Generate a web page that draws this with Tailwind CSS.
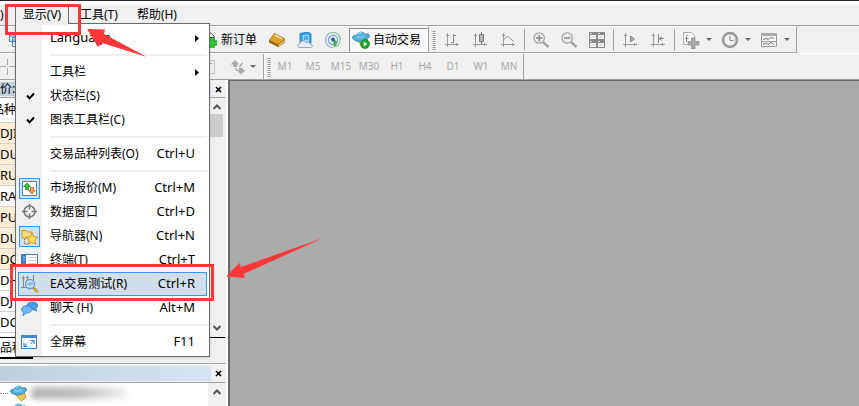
<!DOCTYPE html>
<html lang="zh-CN">
<head>
    <meta charset="UTF-8">
    <meta name="viewport" content="width=device-width, initial-scale=1.0">
    <title>交易终端</title>
    <script src="https://cdn.jsdelivr.net/npm/@tailwindcss/browser@4"></script>
</head>
<body class="relative flex h-screen flex-col overflow-hidden bg-[#f0f0f0] font-['Noto_Sans','Noto_Sans_CJK_SC',sans-serif] text-xs text-black">

    <!-- Símbolos compartidos -->
    <svg class="hidden">
        <symbol id="hat" viewBox="0 0 18 18">
            <path d="M4 8l8 9 5-4-2-5z" fill="#f2c84b" stroke="#a87a12" stroke-width=".8"/>
            <path d="M.500 6.500c0-2 3-2 4-2C5.500 .500 12 0 12.500 3.500c2-1 5-.5 5 1 0 3-4.500 6-9 6s-8-2-8-4z" fill="#4fb2dc" stroke="#2476a3" stroke-width=".8"/>
            <path d="M4.500 5c2 2 6 2 8-.8M6 2.800c1-1 3-1.300 4-.8" stroke="#b9e6f7" fill="none"/>
        </symbol>
        <symbol id="axes" viewBox="0 0 16 16">
            <path d="M3.500 1v14M1 12.500h14M2 3.500h3M12.500 11v3" stroke="#999" fill="none"/>
        </symbol>
        <symbol id="caret" viewBox="0 0 6 3"><path d="M0 0h6L3 3z" fill="#666"/></symbol>
        <symbol id="close" viewBox="0 0 7 7"><path d="M1 1l5 5M6 1L1 6" stroke="#000" stroke-width="1.700"/></symbol>
        <symbol id="check" viewBox="0 0 9 8"><path d="M1 3.500L3.500 6.300 8 1.500" stroke="#000" stroke-width="2" fill="none"/></symbol>
    </svg>

    <!-- Barra de menús -->
    <div class="h-[5px] shrink-0 border-t border-[#2a2529] bg-white"></div>
    <nav class="flex h-5 shrink-0 items-center gap-[3px]">
        <span class="w-3">)</span>
        <button class="h-full w-[54px] text-center">显示(V)</button>
        <button class="h-full px-2">工具(T)</button>
        <button class="h-full px-2">帮助(H)</button>
    </nav>

    <!-- Barra de herramientas principal -->
    <div class="flex h-7 shrink-0 border-t border-[#a0a0a0]">
        <div class="flex items-center border-t border-r border-b border-t-white border-r-[#a0a0a0] border-b-[#a0a0a0]">
            <div class="w-[201px] pl-2">
                <svg class="size-4" viewBox="0 0 16 16"><path d="M1.500 1.500h10v8h-10zM4.500 5.500h10v9h-10zM1 4h11M5 8h9" fill="#e6f1fa" stroke="#3b86c6"/></svg>
            </div>
            <button class="flex w-[62px] items-center gap-1">
                <svg class="size-4" viewBox="0 0 16 16"><path d="M2 1h8l3 3v9H2z" fill="#fff" stroke="#555"/><path d="M4 4h4M4 6h6" stroke="#888"/><path d="M9 5.500h4V9h3.500v4H13v3.500H9V13H5.500V9H9z" fill="#2fd12f" stroke="#128012"/></svg>
                <span class="whitespace-nowrap">新订单</span>
            </button>
            <button class="flex w-7 justify-center" aria-label="市场">
                <svg class="size-4" viewBox="0 0 16 16"><path d="M0 8l9 4v3L0 10.500z" fill="#8d6410"/><path d="M9 12l7-4.500v2.500l-7 5z" fill="#e7c76c" stroke="#9a6b13" stroke-width=".7"/><path d="M5.500 1.500L16 7l-7 5.500L.5 8.200z" fill="#e0a52c" stroke="#9a6b13" stroke-width=".8"/><path d="M6 3l7 3.800" stroke="#fae6a4" stroke-width="1.500"/></svg>
            </button>
            <button class="flex w-7 justify-center" aria-label="云">
                <svg class="size-4" viewBox="0 0 16 16"><path d="M3 1.500L11 0l3 2v9H3z" fill="#38a4ec" stroke="#1272bd" stroke-width=".8"/><path d="M6 3h6v7H6z" fill="#9bdcff"/><path d="M7 5h4M7 7h4" stroke="#1b82d1"/><path d="M2.500 15.500c-3-.5-2.500-4 .5-4 .5-3.500 5-3.500 6-1 3-1.500 4 .5 4 1.500 3 0 3 3.500.5 3.500z" fill="#e7edf6" stroke="#8093b2" stroke-width=".8"/></svg>
            </button>
            <button class="flex w-7 justify-center" aria-label="信号">
                <svg class="size-4" viewBox="0 0 16 16"><g fill="none"><path d="M8 15.500A7.500 7.500 0 1 1 15.500 8" stroke="#8fb0d0" stroke-width="1.200"/><path d="M8 .5A7.500 7.500 0 0 1 10 15" stroke="#9ed09a" stroke-width="1.200"/><circle cx="8" cy="8" r="4.600" stroke="#6f9fce" stroke-width="1.200"/></g><path d="M8 8c5-1 5 5 1 7.500z" fill="#49b04b"/><circle cx="8" cy="7.500" r="2" fill="#2c66ab"/></svg>
            </button>
            <button class="ml-0.5 flex h-6 w-[79px] items-center gap-[3px] border border-t-[#8b8b8b] border-r-white border-b-white border-l-[#8b8b8b] bg-[#f8f8f8] pl-0.5">
                <svg class="size-[18px]" viewBox="0 0 18 18"><use href="#hat"/><circle cx="13" cy="13" r="4.500" fill="#18a52b" stroke="#0c7a1a" stroke-width=".6"/><path d="M11.700 10.500v5l3.600-2.500z" fill="#fff"/></svg>
                <span class="whitespace-nowrap">自动交易</span>
            </button>
        </div>
        <div class="flex items-center border-t border-r border-b border-t-white border-r-[#a0a0a0] border-b-[#a0a0a0] pl-[3px]">
            <svg class="mr-0.5 h-5 w-1" viewBox="0 0 4 20"><path d="M2 1v19" stroke="#999" stroke-width="3" stroke-dasharray="1 1"/></svg>
            <button class="flex w-7 justify-center" aria-label="柱状图">
                <svg class="size-4" viewBox="0 0 16 16"><use href="#axes"/><path d="M9.500 2v9M9.500 3.500H12M7 10.500h2.500" stroke="#888"/></svg>
            </button>
            <button class="flex w-7 justify-center" aria-label="蜡烛图">
                <svg class="size-4" viewBox="0 0 16 16"><use href="#axes"/><path d="M9.500 0v12" stroke="#777"/><path d="M7.500 2.500h4v7h-4z" fill="#b5b5b5" stroke="#777"/></svg>
            </button>
            <button class="flex w-7 justify-center" aria-label="折线图">
                <svg class="size-4" viewBox="0 0 16 16"><use href="#axes"/><path d="M3 9c3-5 5-5 7-3l4 4" stroke="#999" fill="none"/></svg>
            </button>
            <span class="mx-0.5 h-[21px] w-px bg-[#a0a0a0]"></span>
            <button class="flex w-7 justify-center" aria-label="放大">
                <svg class="size-4" viewBox="0 0 16 16"><path d="M10 10l5.500 5" stroke="#a5a5a5" stroke-width="2.500"/><circle cx="6.200" cy="6" r="5.200" fill="#eee" stroke="#a5a5a5" stroke-width="1.300"/><path d="M3 6h6.500M6.200 3v6.500" stroke="#888" stroke-width="1.500"/></svg>
            </button>
            <button class="flex w-7 justify-center" aria-label="缩小">
                <svg class="size-4" viewBox="0 0 16 16"><path d="M10 10l5.500 5" stroke="#a5a5a5" stroke-width="2.500"/><circle cx="6.200" cy="6" r="5.200" fill="#eee" stroke="#a5a5a5" stroke-width="1.300"/><path d="M3 6h6.500" stroke="#888" stroke-width="1.500"/></svg>
            </button>
            <button class="flex w-7 justify-center" aria-label="平铺窗口">
                <svg class="size-4" viewBox="0 0 16 16"><path d="M0 0h16v16H0z" fill="#8a8a8a"/><path d="M1 3h6v4H1zM9 3h6v4H9zM1 11h6v4H1zM9 11h6v4H9z" fill="#f6f6f6"/><path d="M2 5h4M10 5h4M2 13h4M10 13h4" stroke="#ccc"/><path d="M1 1.500h2M9 1.500h2M1 9.500h2M9 9.500h2" stroke="#ddd"/></svg>
            </button>
            <span class="mx-0.5 h-[21px] w-px bg-[#a0a0a0]"></span>
            <button class="flex w-7 justify-center" aria-label="自动滚动">
                <svg class="size-4" viewBox="0 0 16 16"><use href="#axes"/><path d="M8.500 4v6l4-3z" fill="#aaa" stroke="#888"/></svg>
            </button>
            <button class="flex w-7 justify-center" aria-label="图表平移">
                <svg class="size-4" viewBox="0 0 16 16"><use href="#axes"/><path d="M8.500 2v9M9 6.500h5M12 4.500l-3 2 3 2" stroke="#888" fill="none"/></svg>
            </button>
            <span class="mx-0.5 h-[21px] w-px bg-[#a0a0a0]"></span>
            <button class="flex w-[39px] items-center justify-center gap-1.5" aria-label="指标">
                <svg class="size-[18px]" viewBox="0 0 18 18"><path d="M1.500 1.500h8l3 3v9h-11z" fill="#fafafa" stroke="#aaa"/><path d="M4.500 11V5.500c0-1 1-1.500 2-1M3.500 7.500h3" stroke="#777" fill="none"/><path d="M9.500 7h3.500v3.500H17V14h-4v4H9.500v-4H6v-3.500h3.500z" fill="#aaa" stroke="#888" stroke-width=".7"/></svg>
                <svg class="h-[3px] w-1.5"><use href="#caret"/></svg>
            </button>
            <button class="flex w-[39px] items-center justify-center gap-1.5" aria-label="周期">
                <svg class="size-[18px]" viewBox="0 0 18 18"><circle cx="9" cy="9" r="7" fill="#f3f3f3" stroke="#999" stroke-width="2.500"/><path d="M9 5v4.500h3.500" stroke="#888" fill="none"/><path d="M9 3.200v1M9 13.500v1M3.500 9h1M13.500 9h1" stroke="#aaa"/></svg>
                <svg class="h-[3px] w-1.5"><use href="#caret"/></svg>
            </button>
            <button class="mr-0.5 flex w-[39px] items-center justify-center gap-1.5" aria-label="模板">
                <svg class="size-[18px]" viewBox="0 0 18 18"><path d="M1.500 2.500h15v13h-15z" fill="#fafafa" stroke="#999"/><path d="M1 2h16v3H1z" fill="#aaa"/><path d="M1 10.500h16" stroke="#999"/><path d="M3 8.500l3-1 2 1 3-2 3 1M3 13.500l3-1.500 2 1.500 3-2 3 2" stroke="#777" fill="none"/></svg>
                <svg class="h-[3px] w-1.5"><use href="#caret"/></svg>
            </button>
        </div>
    </div>

    <!-- Barra de periodos -->
    <div class="flex h-[27px] shrink-0 border-t border-b border-t-white border-b-[#a0a0a0] text-[10px] text-[#aaa]">
        <div class="flex items-center border-r border-[#a0a0a0]">
            <svg class="size-4" viewBox="0 0 16 16"><path d="M7.500 0v6M7.500 9v7M0 7.500h6M9 7.500h6" stroke="#aaa"/></svg>
            <svg class="ml-[184px] size-4" viewBox="0 0 16 16"><path d="M1.500 1.500h13v13h-13z" fill="none" stroke="#999" stroke-dasharray="1 1"/><path d="M4 4.500h8M8 4.500V13" stroke="#aaa"/></svg>
            <button class="ml-3.5 flex w-[33px] items-center gap-1" aria-label="箭头">
                <svg class="size-4" viewBox="0 0 16 16"><path d="M5 1l4.500 4.500H7V8H3V5.500H.5zM11 15.500l-4.500-4.500H9V9h4v2h2.500z" fill="#aaa"/><path d="M5 9.500l2 2M9.500 8l3-4" stroke="#aaa" stroke-width="1.500" fill="none"/></svg>
                <svg class="h-[3px] w-1.5"><use href="#caret"/></svg>
            </button>
        </div>
        <div class="flex items-center border-r border-l border-r-[#a0a0a0] border-l-white pl-0.5">
            <svg class="h-5 w-1" viewBox="0 0 4 20"><path d="M2 1v19" stroke="#999" stroke-width="3" stroke-dasharray="1 1"/></svg>
            <button class="w-7">M1</button>
            <button class="w-7">M5</button>
            <button class="w-7">M15</button>
            <button class="w-7">M30</button>
            <button class="w-7">H1</button>
            <button class="w-7">H4</button>
            <button class="w-7">D1</button>
            <button class="w-7">W1</button>
            <button class="w-7">MN</button>
        </div>
    </div>

    <main class="flex min-h-0 flex-1">
        <!-- Paneles laterales -->
        <aside class="flex w-[228px] shrink-0 flex-col border-r-2 border-white pt-px">
            <section class="flex h-[283px] shrink-0 flex-col border-b border-[#a0a0a0]">
                <header class="flex h-4 shrink-0 items-center justify-between">
                    <h2 class="h-3.5 w-[211px] bg-linear-to-r from-[#c0cfdf] to-[#d6e4f2] leading-[14px]">价:</h2>
                    <button class="mr-1" aria-label="关闭"><svg class="size-[7px]"><use href="#close"/></svg></button>
                </header>
                <div class="mr-px flex h-[241px] shrink-0 border-t border-b border-t-[#a0a0a0] border-b-black bg-white">
                    <table class="min-w-0 flex-1 table-fixed border-collapse self-start text-[13px]">
                        <thead><tr class="h-6 border-b border-[#d0d0d0] text-xs"><th class="p-0 text-left font-normal"><div class="-ml-2">品种</div></th></tr></thead>
                        <tbody class="leading-5">
                            <tr class="h-[21px] border-b border-[#d0d0d0] bg-[#ffeed6]"><td class="p-0">DJI</td></tr>
                            <tr class="h-[21px] border-b border-[#d0d0d0] bg-[#ffeed6]"><td class="p-0">DU</td></tr>
                            <tr class="h-[21px] border-b border-[#d0d0d0] bg-[#ffeed6]"><td class="p-0">RU</td></tr>
                            <tr class="h-[21px] border-b border-[#d0d0d0]"><td class="p-0">RA</td></tr>
                            <tr class="h-[21px] border-b border-[#d0d0d0] bg-[#ffeed6]"><td class="p-0">PU</td></tr>
                            <tr class="h-[21px] border-b border-[#d0d0d0] bg-[#ffeed6]"><td class="p-0">DU</td></tr>
                            <tr class="h-[21px] border-b border-[#d0d0d0] bg-[#ffeed6]"><td class="p-0">DC</td></tr>
                            <tr class="h-[21px] border-b border-[#d0d0d0]"><td class="p-0">DH</td></tr>
                            <tr class="h-[21px] border-b border-[#d0d0d0]"><td class="p-0">DJ</td></tr>
                            <tr class="h-[21px] border-b border-[#d0d0d0]"><td class="p-0">DC</td></tr>
                        </tbody>
                    </table>
                    <div class="flex w-[17px] flex-col items-center bg-[#f0f0f0]">
                        <svg class="mt-1 size-2.5 shrink-0" viewBox="0 0 10 10"><path d="M1.500 7L5 3.500 8.500 7" stroke="#555" stroke-width="2" fill="none"/></svg>
                        <div class="mt-0.5 mr-0.5 h-[23px] w-[15px] bg-[#cdcdcd]"></div>
                        <svg class="mt-auto mb-1 size-2.5 shrink-0" viewBox="0 0 10 10"><path d="M1.500 3L5 6.500 8.500 3" stroke="#555" stroke-width="2" fill="none"/></svg>
                    </div>
                </div>
                <button class="h-[21px] w-[33px] border-r-2 border-b-2 border-black bg-white text-left">品种</button>
            </section>
            <section class="flex min-h-0 flex-1 flex-col border-t border-white">
                <header class="flex h-[17px] shrink-0 items-center justify-between">
                    <div class="h-[15px] w-[211px] bg-linear-to-r from-[#c0cfdf] to-[#d6e4f2]"></div>
                    <button class="mr-1" aria-label="关闭"><svg class="size-[7px]"><use href="#close"/></svg></button>
                </header>
                <div class="mr-px flex min-h-0 flex-1 border-t border-[#a0a0a0] bg-white">
                    <div class="flex-1 overflow-hidden">
                        <div class="flex h-5 items-center">
                            <span class="mr-0.5 w-2 border-t border-dotted border-[#888]"></span>
                            <svg class="size-[17px]"><use href="#hat"/></svg>
                            <span class="ml-1 h-3 w-24 rounded bg-linear-to-r from-[#b0b0b0] via-[#bcbcbc] to-[#f4f4f4] blur-[3px]"></span>
                        </div>
                        <svg class="ml-2.5 size-[17px]"><use href="#hat"/></svg>
                    </div>
                    <div class="flex w-[17px] justify-center bg-[#f0f0f0]">
                        <svg class="mt-1 size-2.5" viewBox="0 0 10 10"><path d="M1.500 7L5 3.500 8.500 7" stroke="#555" stroke-width="2" fill="none"/></svg>
                    </div>
                </div>
            </section>
        </aside>
        <div class="flex-1 border-t border-l-2 border-[#696969] bg-[#ababab]"></div>
    </main>

    <!-- Menú desplegado -->
    <div class="absolute top-[7px] left-[15px] h-[18px] w-[54px] border-x border-[#6b6b6b]"></div>
    <div class="absolute top-[23px] left-[15px] w-[195px] border border-[#6b6b6b] bg-linear-to-r from-[#f0f0f0] from-[26px] to-white to-[26px] pt-0.5 pb-0.5 shadow-sm">
        <button class="flex h-6 w-full items-center pr-2.5">
            <span class="w-[34px]"></span><span class="text-[13px]">Language</span>
            <svg class="ml-auto h-[7px] w-1" viewBox="0 0 4 7"><path d="M0 0v7l4-3.500z"/></svg>
        </button>
        <hr class="my-1 mr-0.5 ml-[34px] border-t-2 border-[#efefef]">
        <button class="flex h-6 w-full items-center pr-2.5">
            <span class="w-[34px]"></span><span>工具栏</span>
            <svg class="ml-auto h-[7px] w-1" viewBox="0 0 4 7"><path d="M0 0v7l4-3.500z"/></svg>
        </button>
        <button class="flex h-6 w-full items-center pr-3.5">
            <span class="flex w-[34px] pl-2.5"><svg class="h-2 w-[9px]"><use href="#check"/></svg></span><span>状态栏(S)</span>
        </button>
        <button class="flex h-6 w-full items-center pr-3.5">
            <span class="flex w-[34px] pl-2.5"><svg class="h-2 w-[9px]"><use href="#check"/></svg></span><span>图表工具栏(C)</span>
        </button>
        <hr class="my-1 mr-0.5 ml-[34px] border-t-2 border-[#efefef]">
        <button class="flex h-6 w-full items-center pr-3.5">
            <span class="w-[34px]"></span><span>交易品种列表(O)</span><span class="ml-auto text-[13px]">Ctrl+U</span>
        </button>
        <hr class="my-1 mr-0.5 ml-[34px] border-t-2 border-[#efefef]">
        <button class="flex h-6 w-full items-center pr-3.5">
            <span class="flex w-[34px] pl-[3px]"><svg class="size-[21px] border border-[#3399ff] bg-[#d0e0f0]" viewBox="0 0 19 19"><path d="M2.500 2.500h14v14h-14z" fill="#fff" stroke="#4c86bd"/><path d="M3.500 7.500L7 4l3.500 3.500h-2v3h-3v-3z" fill="#35c435" stroke="#167d16" stroke-width=".7"/><path d="M8.500 11.500L12 15l3.500-3.500h-2v-3h-3v3z" fill="#ff9a66" stroke="#c64a16" stroke-width=".7"/></svg></span>
            <span>市场报价(M)</span><span class="ml-auto text-[13px]">Ctrl+M</span>
        </button>
        <button class="flex h-6 w-full items-center pr-3.5">
            <span class="flex w-[34px] pl-[5px]"><svg class="size-[18px]" viewBox="0 0 18 18"><circle cx="8.500" cy="8.500" r="5.500" fill="none" stroke="#777" stroke-width="1.500"/><path d="M8.500 1v5.500M8.500 10.500V16M1 8.500h5.500M10.500 8.500H16" stroke="#777" stroke-width="1.500"/></svg></span>
            <span>数据窗口</span><span class="ml-auto text-[13px]">Ctrl+D</span>
        </button>
        <button class="flex h-6 w-full items-center pr-3.5">
            <span class="flex w-[34px] pl-[3px]"><svg class="size-[21px] border border-[#3399ff] bg-[#d0e0f0]" viewBox="0 0 19 19"><path d="M2 3.500h4l1.500 1.500H12V11H2z" fill="#f8dc81" stroke="#c0922d"/><path d="M4.500 12v5H8" stroke="#666" stroke-dasharray="1 1" fill="none"/><path d="M12 6l1.800 3.800 4.200.4-3.200 2.800 1 4.200L12 15l-3.800 2.200 1-4.200L6 10.200l4.200-.4z" fill="#ffdf5a" stroke="#b98217" stroke-width=".8"/></svg></span>
            <span>导航器(N)</span><span class="ml-auto text-[13px]">Ctrl+N</span>
        </button>
        <button class="flex h-6 w-full items-center pr-3.5">
            <span class="flex w-[34px] pl-[5px]"><svg class="size-[17px]" viewBox="0 0 17 17"><path d="M.5 2.500h16v12H.5z" fill="#fff" stroke="#3f7cb9"/><path d="M1 3h4v11H1z" fill="#3f83c8"/><path d="M7 5.500h8M7 8.500h8M7 11.500h8" stroke="#ccc"/><path d="M2 5h2M2 8h2" stroke="#9cc6ee"/></svg></span>
            <span>终端(T)</span><span class="ml-auto text-[13px]">Ctrl+T</span>
        </button>
        <button class="mx-0.5 flex h-6 w-[189px] items-center border border-[#3399ff] bg-[#d1dfec] pr-[11px]">
            <span class="flex w-[31px] pl-0.5"><svg class="size-[18px]" viewBox="0 0 18 18"><path d="M2.500 1v12M1 3h3M0 12.500h10M6.500 1v5M12.500 0v5M5 2.500h3" stroke="#888"/><path d="M11.500 12l5 5" stroke="#d69a2d" stroke-width="2.500"/><circle cx="9" cy="9" r="4.500" fill="#c8e6fa" stroke="#6d9cc3" stroke-width="1.300"/><path d="M7 10V8M9 11V7M11 10V7" stroke="#5a8fba"/></svg></span>
            <span>EA交易测试(R)</span><span class="ml-auto text-[13px]">Ctrl+R</span>
        </button>
        <button class="flex h-6 w-full items-center pr-3.5">
            <span class="flex w-[34px] pl-[5px]"><svg class="size-[17px]" viewBox="0 0 17 17"><path d="M6 5c1-4 10-4 10.500 0 .3 2-1 3-1.500 3.500L15.500 11 12 9.500C8 10 6 8 6 5z" fill="#4b9be6" stroke="#2c72b8" stroke-width=".7"/><path d="M.5 9C1 5 10 4.500 11 8.500c.5 3-2.500 4.500-6 4.500l-3 3 .5-3.500C1 11.500.5 10 .5 9z" fill="#71b7f2" stroke="#2c72b8" stroke-width=".7"/></svg></span>
            <span>聊天 (H)</span><span class="ml-auto text-[13px]">Alt+M</span>
        </button>
        <hr class="my-1 mr-0.5 ml-[34px] border-t-2 border-[#efefef]">
        <button class="flex h-6 w-full items-center pr-3.5">
            <span class="flex w-[34px] pl-[5px]"><svg class="size-4" viewBox="0 0 16 16"><path d="M.5 1.500h15v13H.5z" fill="#f4f9fe" stroke="#3f7cb9"/><path d="M0 1h16v3H0z" fill="#4687c8"/><path d="M9.500 6.500H13V10M13 6.500L9.500 10M6.500 12.500H3V9M3 12.500L6 9.500" stroke="#3478b8" fill="none"/></svg></span>
            <span>全屏幕</span><span class="ml-auto text-[13px]">F11</span>
        </button>
    </div>
    <!-- Une el título con el menú -->
    <div class="absolute top-[23px] left-4 h-0.5 w-[52px] bg-[#f0f0f0]"></div>

    <!-- Marcas rojas -->
    <div class="absolute top-1 left-[5px] h-[31px] w-[76px] border-3 border-[#ff3737]"></div>
    <div class="absolute top-[264px] left-2.5 h-[37px] w-[204px] border-3 border-[#ff3737]"></div>
    <svg class="absolute top-7 left-[86px] h-[30px] w-[62px]" viewBox="86 28 62 30"><path d="M87 29l18 .5-1 4.500 43 23-45-14-4 4z" fill="#ff3737"/></svg>
    <svg class="absolute top-[237px] left-[226px] h-[43px] w-[98px]" viewBox="226 237 98 43"><path d="M226 276.500l13.500-13.500 1.500 4 82-29-79.500 36 1.500 4z" fill="#ff3737"/></svg>
</body>
</html>
